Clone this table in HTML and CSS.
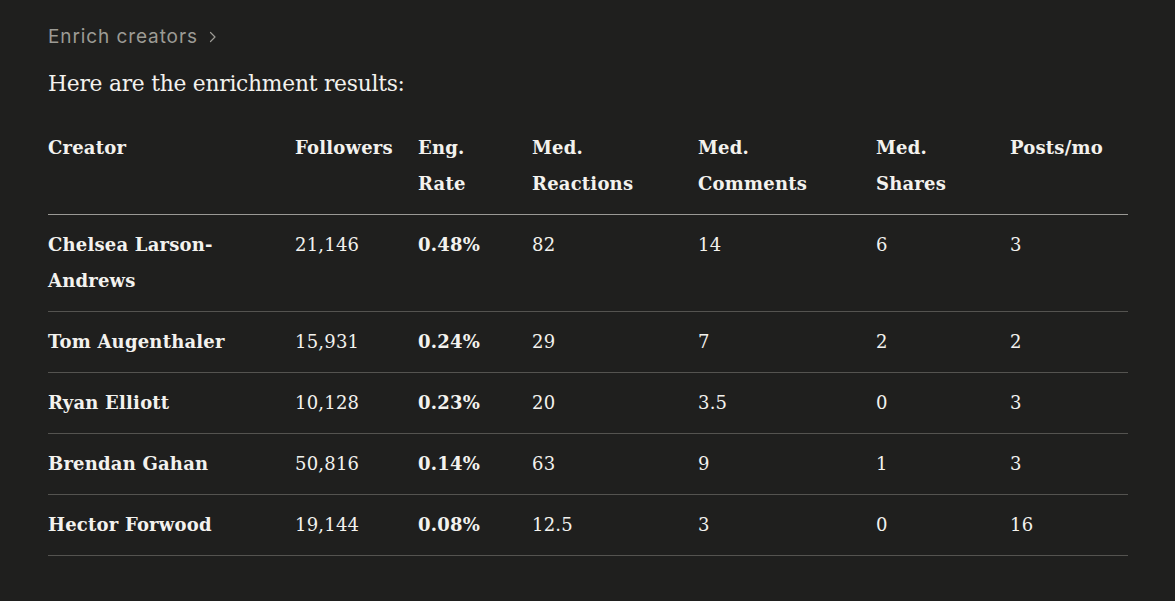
FILE: index.html
```html
<!DOCTYPE html>
<html lang="en">
<head>
<meta charset="utf-8">
<title>Enrichment results</title>
<link rel="stylesheet" href="styles.css">
</head>
<body>
<main class="page">
  <div class="crumb">
    <span>Enrich creators</span>
    <svg class="chev" width="8" height="12" viewBox="0 0 8 12" aria-hidden="true"><path d="M1.5 1.5 L6 6 L1.5 10.5" fill="none" stroke="currentColor" stroke-width="1.2" stroke-linecap="round" stroke-linejoin="round"/></svg>
  </div>
  <p class="intro">Here are the enrichment results:</p>
  <table class="results">
    <colgroup>
      <col class="c1"><col class="c2"><col class="c3"><col class="c4"><col class="c5"><col class="c6"><col class="c7">
    </colgroup>
    <thead>
      <tr>
        <th>Creator</th>
        <th>Followers</th>
        <th>Eng.<br>Rate</th>
        <th>Med.<br>Reactions</th>
        <th>Med.<br>Comments</th>
        <th>Med.<br>Shares</th>
        <th>Posts/mo</th>
      </tr>
    </thead>
    <tbody>
      <tr>
        <td><b>Chelsea Larson-<br>Andrews</b></td>
        <td>21,146</td><td><b>0.48%</b></td><td>82</td><td>14</td><td>6</td><td>3</td>
      </tr>
      <tr>
        <td><b>Tom Augenthaler</b></td>
        <td>15,931</td><td><b>0.24%</b></td><td>29</td><td>7</td><td>2</td><td>2</td>
      </tr>
      <tr>
        <td><b>Ryan Elliott</b></td>
        <td>10,128</td><td><b>0.23%</b></td><td>20</td><td>3.5</td><td>0</td><td>3</td>
      </tr>
      <tr>
        <td><b>Brendan Gahan</b></td>
        <td>50,816</td><td><b>0.14%</b></td><td>63</td><td>9</td><td>1</td><td>3</td>
      </tr>
      <tr>
        <td><b>Hector Forwood</b></td>
        <td>19,144</td><td><b>0.08%</b></td><td>12.5</td><td>3</td><td>0</td><td>16</td>
      </tr>
    </tbody>
  </table>
</main>
</body>
</html>
```

FILE: styles.css
```css
html, body {
  margin: 0;
  padding: 0;
  background: #1f1f1e;
  color: #f3f2ee;
}
.page {
  padding: 22px 48px 0 48px;
  font-family: "DejaVu Serif", "Liberation Serif", serif;
}
.crumb {
  display: flex;
  align-items: center;
  gap: 11px;
  height: 28px;
  font-family: "Inter", "Noto Sans", sans-serif;
  font-size: 19px;
  color: #9c9b95;
  letter-spacing: 0.9px;
}
.chev {
  color: #9c9b95;
  margin-top: 2px;
}
.intro {
  margin: 18px 0 0 0;
  font-size: 21.8px;
  line-height: 32px;
  letter-spacing: -0.25px;
}
.results {
  margin-top: 18px;
  width: 1080px;
  border-collapse: collapse;
  table-layout: fixed;
  font-size: 18px;
  line-height: 36px;
  letter-spacing: 0.2px;
}
.c1 { width: 247px; }
.c2 { width: 123px; }
.c3 { width: 114px; }
.c4 { width: 166px; }
.c5 { width: 178px; }
.c6 { width: 134px; }
.c7 { width: 118px; }
.results th {
  text-align: left;
  font-weight: 700;
  vertical-align: top;
  padding: 12px 2px 12px 0;
  border-bottom: 1px solid #9a9995;
}
.results td {
  vertical-align: top;
  padding: 12px 2px 12px 0;
  border-bottom: 1px solid #545350;
}
.results b {
  font-weight: 700;
}
```
